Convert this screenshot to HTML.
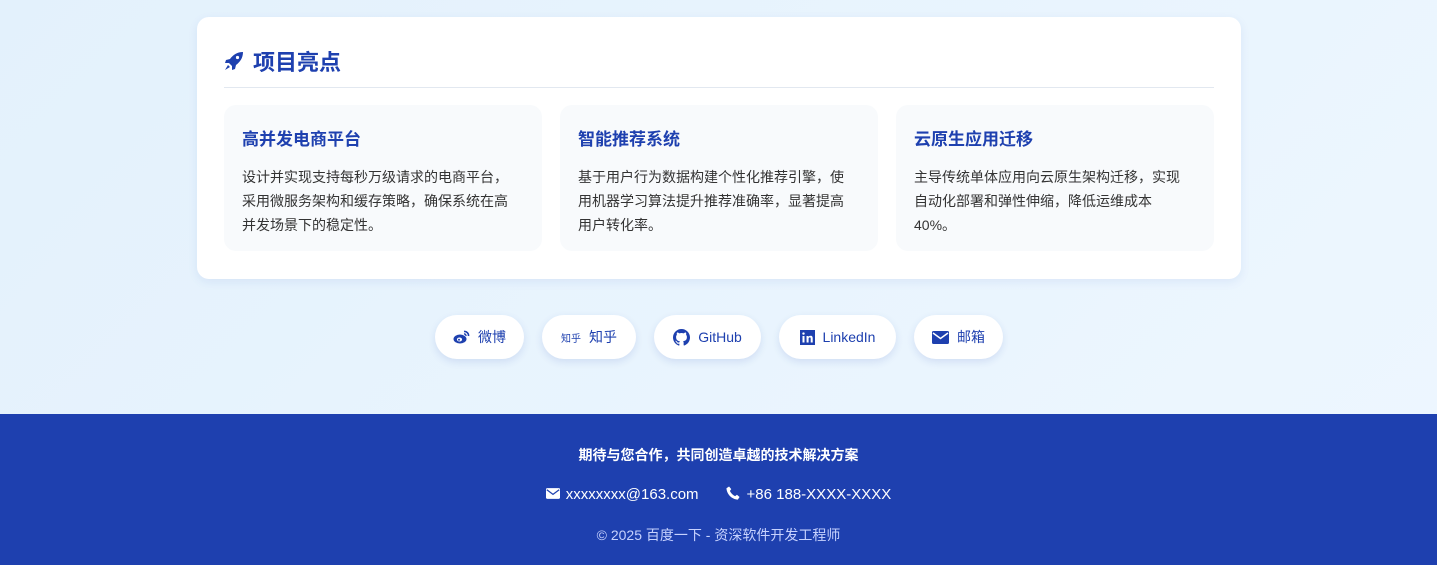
<!DOCTYPE html>
<html><head><meta charset="utf-8"><style>
*{margin:0;padding:0;box-sizing:border-box}
body{width:1437px;height:565px;overflow:hidden;font-family:"Liberation Sans","Noto Sans CJK SC",sans-serif;background:linear-gradient(135deg,#e3f1fc,#eef7ff);position:relative}
.card{position:absolute;left:197px;top:17px;width:1044px;height:262px;background:#fff;border-radius:12px;box-shadow:0 3px 10px rgba(30,64,175,.08)}
.h{position:absolute;left:27px;top:28px;font-size:22px;font-weight:bold;color:#1e40af;display:flex;align-items:center;gap:9px}
.div{position:absolute;left:27px;right:27px;top:70px;height:1px;background:#e2e8f0}
.it{position:absolute;top:88px;width:318px;height:146px;background:#f8fafc;border-radius:12px;padding:19px 18px}
.it h3{font-size:17px;color:#1e40af;margin-top:1px}
.it p{font-size:14px;line-height:24px;color:#333;margin-top:15px;width:276px}
.btn{position:absolute;top:315px;height:44px;border-radius:22px;background:#fff;box-shadow:0 3px 8px rgba(30,64,175,.12);display:flex;align-items:center;justify-content:center;gap:8px;color:#1e40af;font-size:14px}
.foot{position:absolute;left:0;top:414px;width:1437px;height:151px;background:#1e40af;color:#fff;text-align:center}
</style></head><body>
<div class="card">
<div class="h"><svg width="20" height="20" viewBox="0 0 20 20"><path d="M19 1C13 1 9 4 6 8L2 9 1 12 5 12 8 15 8 19 11 18 12 14C16 11 19 7 19 1Z" fill="#1e40af"/><circle cx="13.5" cy="6.5" r="1.6" fill="#fff"/><path d="M4 14 1 19 6 16Z" fill="#1e40af"/></svg>项目亮点</div>
<div class="div"></div>
<div class="it" style="left:27px"><h3>高并发电商平台</h3><p>设计并实现支持每秒万级请求的电商平台，采用微服务架构和缓存策略，确保系统在高并发场景下的稳定性。</p></div>
<div class="it" style="left:363px"><h3>智能推荐系统</h3><p>基于用户行为数据构建个性化推荐引擎，使用机器学习算法提升推荐准确率，显著提高用户转化率。</p></div>
<div class="it" style="left:699px"><h3>云原生应用迁移</h3><p>主导传统单体应用向云原生架构迁移，实现自动化部署和弹性伸缩，降低运维成本<br>40%。</p></div>
</div>
<div class="btn" style="left:435px;width:89px"><svg width="17" height="14" viewBox="0 0 17 14"><ellipse cx="7" cy="9" rx="6.5" ry="4.5" fill="#1e40af"/><ellipse cx="6.5" cy="9.5" rx="2.6" ry="2" fill="#fff"/><circle cx="6" cy="9.7" r="1" fill="#1e40af"/><path d="M11 1.5a4 4 0 0 1 4.5 4.5" stroke="#1e40af" stroke-width="1.6" fill="none"/><path d="M11 4a1.8 1.8 0 0 1 2 2" stroke="#1e40af" stroke-width="1.4" fill="none"/></svg>微博</div>
<div class="btn" style="left:542px;width:94px"><span style="font-size:10px">知乎</span>知乎</div>
<div class="btn" style="left:654px;width:107px"><svg width="17" height="17" viewBox="0 0 16 16"><path fill="#1e40af" d="M8 0C3.6 0 0 3.6 0 8c0 3.5 2.3 6.5 5.5 7.6.4.1.5-.2.5-.4v-1.4c-2.2.5-2.7-1-2.7-1-.4-.9-.9-1.2-.9-1.200-.7-.5.1-.5.1-.5.8.1 1.2.8 1.2.8.7 1.2 1.9.9 2.3.7.1-.5.3-.9.5-1.100-1.800-.2-3.600-.9-3.600-4 0-.9.3-1.600.8-2.100-.1-.2-.4-1 .1-2.100 0 0 .7-.2 2.200.8.6-.2 1.300-.3 2-.3s1.400.1 2 .3c1.500-1 2.200-.8 2.200-.8.4 1.100.2 1.900.1 2.100.5.6.8 1.300.8 2.100 0 3.100-1.900 3.700-3.600 3.900.3.3.5.8.5 1.500v2.200c0 .2.1.5.6.4C13.7 14.5 16 11.5 16 8c0-4.400-3.600-8-8-8z"/></svg>GitHub</div>
<div class="btn" style="left:779px;width:117px"><svg width="15" height="15" viewBox="0 0 15 15"><rect width="15" height="15" fill="#1e40af"/><rect x="2.5" y="6" width="2" height="6.5" fill="#fff"/><circle cx="3.5" cy="3.6" r="1.2" fill="#fff"/><path d="M6.5 6h2v1c.5-.8 1.3-1.2 2.2-1.2 1.5 0 2 1 2 2.5v4.2h-2V8.6c0-.8-.3-1.2-.9-1.2s-1.2.4-1.2 1.3v3.8h-2z" fill="#fff"/></svg>LinkedIn</div>
<div class="btn" style="left:914px;width:89px"><svg width="17" height="13" viewBox="0 0 17 13"><rect width="17" height="13" rx="1.5" fill="#1e40af"/><path d="M1 2l7.5 5.5L16 2" stroke="#fff" stroke-width="1.5" fill="none"/></svg>邮箱</div>
<div class="foot">
<div style="position:absolute;top:31px;width:100%;font-size:14px;font-weight:bold">期待与您合作，共同创造卓越的技术解决方案</div>
<div style="position:absolute;top:72px;width:100%;font-size:15px;display:flex;justify-content:center;gap:27px">
<span><svg width="14" height="11" viewBox="0 0 17 13" style="margin-right:6px"><rect width="17" height="13" rx="1.5" fill="#fff"/><path d="M1 2l7.5 5.5L16 2" stroke="#1e40af" stroke-width="1.5" fill="none"/></svg>xxxxxxxx@163.com</span>
<span><svg width="14" height="14" viewBox="0 0 16 16" style="margin-right:7px;vertical-align:-1px"><path d="M3.5 0.5 6 3.5 4.5 5.5C5.5 8 8 10.5 10.5 11.5L12.5 10 15.5 12.5 13.5 15.5C6.5 15 1 9.5 0.5 2.5Z" fill="#fff"/></svg>+86 188-XXXX-XXXX</span></div>
<div style="position:absolute;top:111px;width:100%;font-size:14px;color:#c7d2fe">© 2025 百度一下 - 资深软件开发工程师</div>
</div>
</body></html>
